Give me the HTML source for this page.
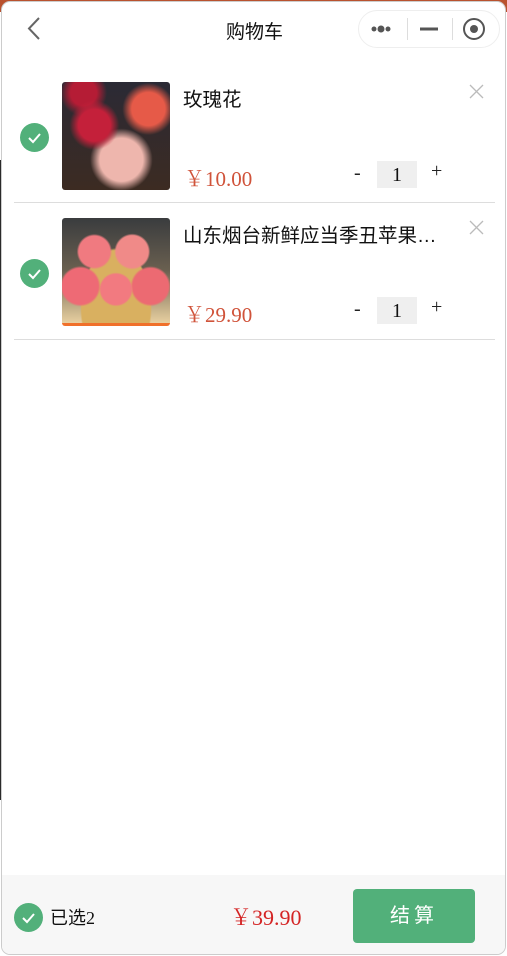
<!DOCTYPE html>
<html><head><meta charset="utf-8"><style>
*{margin:0;padding:0;box-sizing:border-box}
html,body{width:507px;height:956px;overflow:hidden;background:#fff}
body{position:relative;font-family:"Liberation Sans","Noto Sans CJK SC",sans-serif}
.topbg{position:absolute;left:0;top:0;width:507px;height:12px;background:#b9522e}
.lstrip{position:absolute;left:0;top:160px;width:2px;height:640px;background:#2a2a2a}
.win{position:absolute;left:1px;top:1px;width:505px;height:954px;background:#fff;border:1px solid #ccc;border-radius:9px;overflow:hidden}
.a{position:absolute}
.title{left:0;width:505px;top:15px;text-align:center;font-size:19px;color:#111}
.caps{left:356px;top:8px;width:142px;height:38px;border:1px solid #eee;border-radius:19px}
.check{width:29px;height:29px;border-radius:50%;background:#52b07a}
.img{width:108px;height:108px;border-radius:3px;overflow:hidden}
.name{font-size:19.5px;color:#111;white-space:nowrap}
.price{font-family:"Liberation Serif","Noto Serif CJK SC",serif;font-size:21px;color:#d0533a}
.qty{width:40px;height:27px;background:#efefef;text-align:center;font-family:"Liberation Serif",serif;font-size:20px;line-height:28px;color:#111}
.pm{font-size:20px;color:#222;font-family:"Liberation Serif",serif}
.hr{left:12px;width:481px;height:1px;background:#ddd}
.foot{left:0;top:873px;width:505px;height:82px;background:#f7f7f7}
</style></head><body>
<div class="topbg"></div><div class="lstrip"></div>
<div class="win">
<svg class="a" style="left:24px;top:14px" width="16" height="26"><path d="M13 2 L3 12.5 L13 23" fill="none" stroke="#666" stroke-width="2"/></svg>
<div class="a title">购物车</div>
<div class="a caps"></div>
<svg class="a" style="left:356px;top:8px" width="142" height="38"><circle cx="16" cy="19" r="2.5" fill="#555"/><circle cx="23" cy="19" r="3.5" fill="#555"/><circle cx="30" cy="19" r="2.5" fill="#555"/><line x1="49.5" y1="8" x2="49.5" y2="30" stroke="#ddd"/><rect x="62" y="17.5" width="18" height="3" fill="#555"/><line x1="94.5" y1="8" x2="94.5" y2="30" stroke="#ddd"/><circle cx="116" cy="19" r="10" fill="none" stroke="#555" stroke-width="2"/><circle cx="116" cy="19" r="4" fill="#555"/></svg>

<div class="a check" style="left:18px;top:121px"><svg width="29" height="29"><path d="M9 15 L13 19 L20 11" fill="none" stroke="#fff" stroke-width="2"/></svg></div>
<div class="a img" style="left:60px;top:80px;background:radial-gradient(circle at 80% 25%,#e65a48 0 14%,transparent 22%),radial-gradient(circle at 30% 40%,#c4203a 0 16%,transparent 25%),radial-gradient(circle at 55% 72%,#eeb6ad 0 22%,transparent 32%),radial-gradient(circle at 20% 10%,#b51c35 0 10%,transparent 18%),linear-gradient(#2b2a35,#3c2b22)"></div>
<div class="a name" style="left:181px;top:81px">玫瑰花</div>
<div class="a price" style="left:182px;top:161px">￥10.00</div>
<div class="a pm" style="left:352px;top:160px">-</div>
<div class="a qty" style="left:375px;top:159px">1</div>
<div class="a pm" style="left:429px;top:158px">+</div>
<svg class="a" style="left:467px;top:82px" width="15" height="15"><path d="M1 1L14 14M14 1L1 14" stroke="#bbb" stroke-width="1.3"/></svg>
<div class="a hr" style="top:200px"></div>

<div class="a check" style="left:18px;top:257px"><svg width="29" height="29"><path d="M9 15 L13 19 L20 11" fill="none" stroke="#fff" stroke-width="2"/></svg></div>
<div class="a img" style="left:60px;top:216px;border-bottom:3px solid #f0702a;background:radial-gradient(circle at 30% 32%,#f07a80 0 15%,transparent 17%),radial-gradient(circle at 65% 32%,#f08a88 0 16%,transparent 18%),radial-gradient(circle at 17% 65%,#ee6a75 0 16%,transparent 18%),radial-gradient(circle at 50% 68%,#f27a80 0 17%,transparent 19%),radial-gradient(circle at 82% 65%,#ec6a72 0 16%,transparent 18%),radial-gradient(ellipse at 50% 85%,#d9b060 0 45%,transparent 47%),linear-gradient(#3a3c3e,#6a6050 50%,#e8d0a0)"></div>
<div class="a name" style="left:181px;top:217px">山东烟台新鲜应当季丑苹果…</div>
<div class="a price" style="left:182px;top:297px">￥29.90</div>
<div class="a pm" style="left:352px;top:296px">-</div>
<div class="a qty" style="left:375px;top:295px">1</div>
<div class="a pm" style="left:429px;top:294px">+</div>
<svg class="a" style="left:467px;top:218px" width="15" height="15"><path d="M1 1L14 14M14 1L1 14" stroke="#bbb" stroke-width="1.3"/></svg>
<div class="a hr" style="top:337px"></div>

<div class="a foot"></div>
<div class="a check" style="left:12px;top:901px"><svg width="29" height="29"><path d="M9 15 L13 19 L20 11" fill="none" stroke="#fff" stroke-width="2"/></svg></div>
<div class="a" style="left:48px;top:902px;font-size:18px;color:#111">已选<span style="font-family:'Liberation Serif',serif">2</span></div>
<div class="a" style="left:228px;top:899px;font-size:22px;color:#d42424;font-family:'Liberation Serif','Noto Serif CJK SC',serif">￥39.90</div>
<div class="a" style="left:351px;top:887px;width:122px;height:54px;background:#52b07a;border-radius:4px;color:#fff;font-size:20px;text-align:center;line-height:54px;letter-spacing:4px">结算</div>
</div>
</body></html>
